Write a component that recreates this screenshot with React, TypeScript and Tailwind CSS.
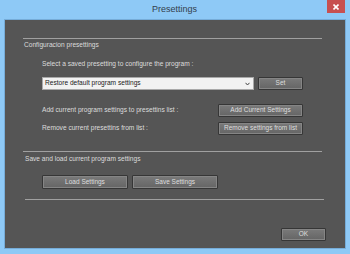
import React from 'react';

const font = { fontFamily: '"Liberation Sans", Arial, sans-serif' };

function Btn({ label, w, h = 'h-[13px]' }: { label: string; w: string; h?: string }) {
  return (
    <div
      className={`${w} ${h} flex items-center justify-center rounded-[1px] border border-[#363636] bg-gradient-to-b from-[#7a7a7a] to-[#656565] shadow-[inset_0_0_0_1px_#858585] text-[6.5px] leading-none text-[#dedede]`}
    >
      {label}
    </div>
  );
}

function Line({ ml, w }: { ml: string; w: string }) {
  return <div className={`${ml} ${w} h-px bg-[#a0a0a0]`} />;
}

export default function App() {
  return (
    <div className="w-[350px] h-[254px] bg-[#8ec9f6] flex flex-col overflow-hidden" style={font}>
      {/* title bar */}
      <div className="h-[19px] flex items-start">
        <div className="flex-1 h-[19px] flex items-center justify-center pl-[22px] text-[9px] text-[#34404c]">
          Presettings
        </div>
        <div className="w-[18px] h-[13px] bg-[#c75050] flex items-center justify-center mr-[5px]">
          <svg width="6" height="6" viewBox="0 0 6 6">
            <path d="M0.5 0.5 L5.5 5.5 M5.5 0.5 L0.5 5.5" stroke="#ffffff" strokeWidth="1.6" />
          </svg>
        </div>
      </div>

      {/* client area */}
      <div className="mx-[4px] mb-[5px] h-[230px] border border-[#76acd8] bg-[#555555] flex flex-col text-[#dcdcdc]">
        <div className="h-[18px]" />
        <Line ml="ml-[18px]" w="w-[299px]" />

        <div className="mt-[2px] ml-[19px] h-[9px] flex items-center text-[6.6px] leading-none">
          Configuracion presettings
        </div>

        <div className="mt-[10px] ml-[37px] h-[9px] flex items-center text-[6.6px] leading-none">
          Select a saved presetting to configure the program :
        </div>

        <div className="mt-[8px] ml-[37px] flex items-center gap-[4px]">
          <div className="w-[212px] h-[13px] bg-[#f2f2f2] border border-[#a9a9a9] flex items-center justify-between pl-[2px] pr-[3px] text-[6.6px] leading-none text-[#1a1a1a]">
            <span>Restore default program settings</span>
            <svg width="5" height="4" viewBox="0 0 5 4">
              <path d="M0.5 0.8 L2.5 3 L4.5 0.8" fill="none" stroke="#444444" strokeWidth="1" />
            </svg>
          </div>
          <Btn label="Set" w="w-[45px]" />
        </div>

        <div className="mt-[14px] ml-[37px] w-[261px] flex items-center justify-between">
          <span className="text-[6.6px] leading-none">Add current program settings to presettins list :</span>
          <Btn label="Add Current Settings" w="w-[85px]" />
        </div>

        <div className="mt-[5px] ml-[37px] w-[261px] flex items-center justify-between">
          <span className="text-[6.6px] leading-none">Remove current presettins from list :</span>
          <Btn label="Remove settings from list" w="w-[85px]" />
        </div>

        <div className="mt-[16px]" />
        <Line ml="ml-[18px]" w="w-[299px]" />

        <div className="mt-[3px] ml-[20px] h-[9px] flex items-center text-[6.6px] leading-none">
          Save and load current program settings
        </div>

        <div className="mt-[11px] ml-[37px] flex items-center gap-[4px]">
          <Btn label="Load Settings" w="w-[86px]" h="h-[14px]" />
          <Btn label="Save Settings" w="w-[86px]" h="h-[14px]" />
        </div>

        <div className="mt-[10px]" />
        <Line ml="ml-[20px]" w="w-[299px]" />

        <div className="mt-[28px] flex justify-end pr-[19px]">
          <Btn label="OK" w="w-[45px]" />
        </div>
      </div>
    </div>
  );
}
